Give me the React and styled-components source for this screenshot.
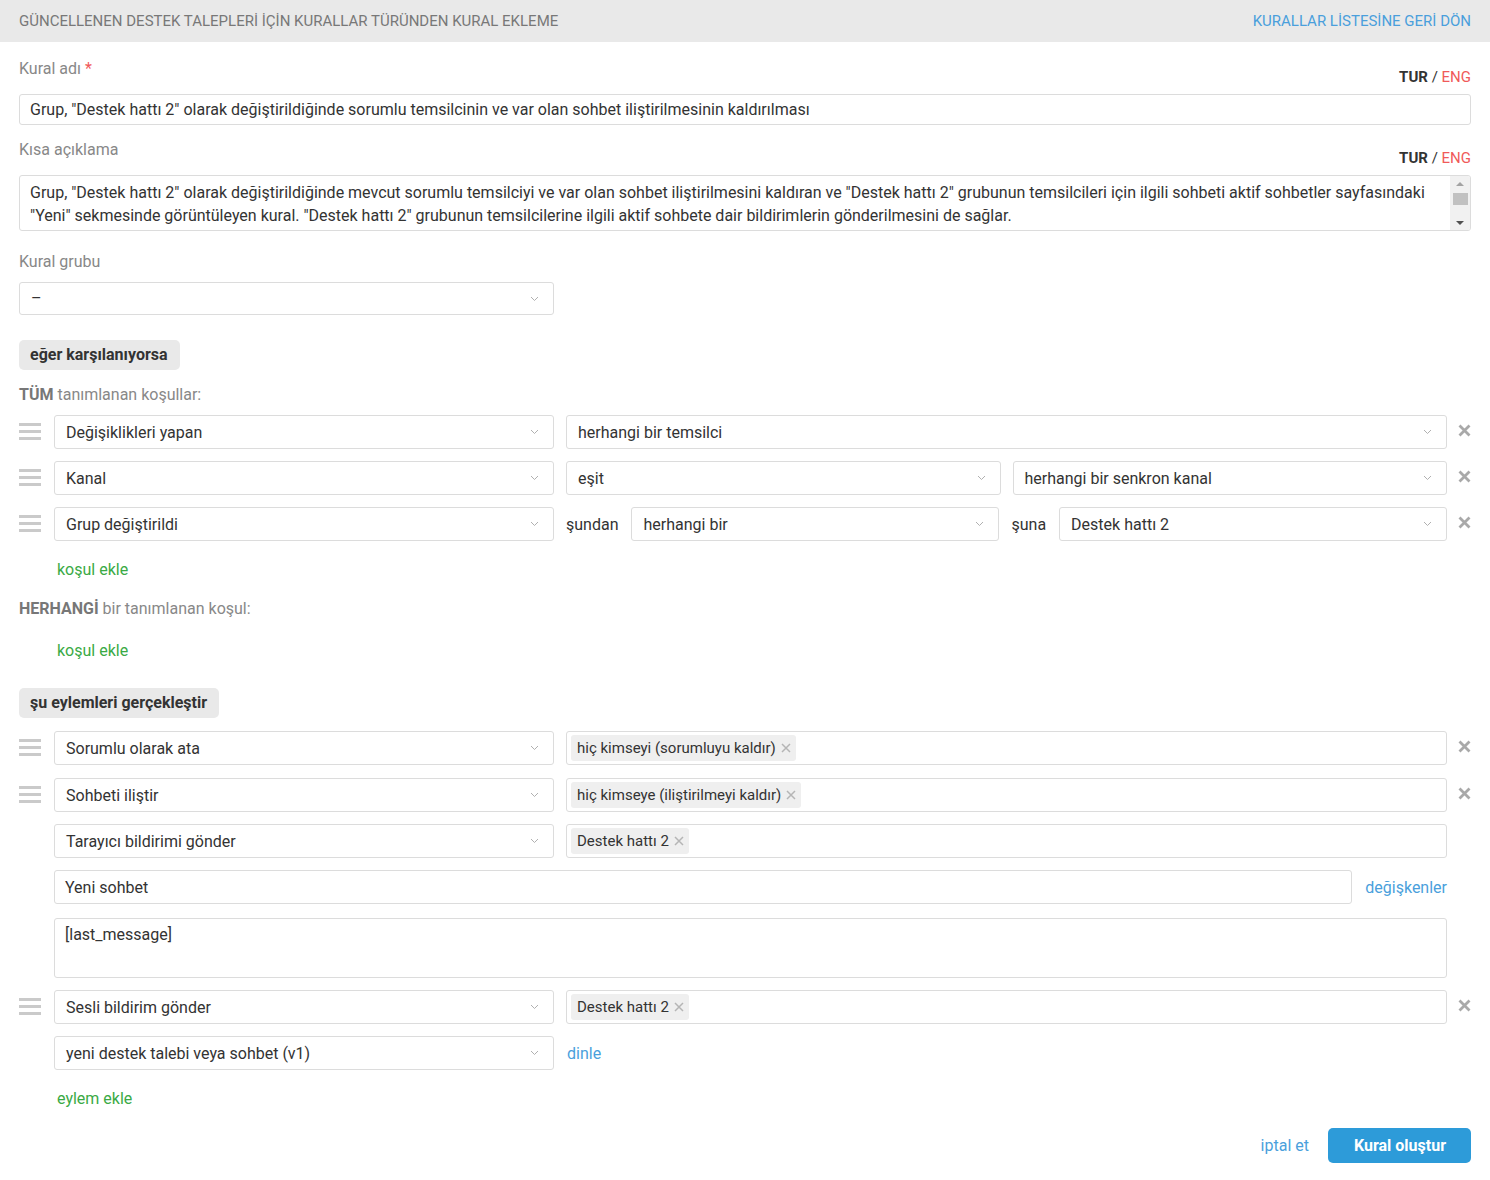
import React from 'react'
import styled, { createGlobalStyle } from 'styled-components'

const GlobalStyle = createGlobalStyle`
  body {
    margin: 0;
    background: #fff;
    font-family: Roboto, "Liberation Sans", sans-serif;
    color: #333;
  }
`

const colors = {
  text: '#333',
  muted: '#888',
  border: '#dcdcdc',
  blue: '#4a9fdc',
  green: '#3aaa45',
  red: '#f05a5a',
  grey: '#e9e9e9'
}

const Page = styled.div`
  width: 1490px;
`

const TopBar = styled.header`
  display: flex;
  justify-content: space-between;
  align-items: center;
  height: 42px;
  padding: 0 19px;
  background: ${colors.grey};
  font-size: 15px;
`

const Title = styled.span`
  color: #787878;
`

const BackLink = styled.a`
  color: ${colors.blue};
  text-decoration: none;
`

const Body = styled.main`
  padding: 16px 19px 17px;
`

const FieldHead = styled.div`
  display: flex;
  justify-content: space-between;
  align-items: flex-end;
  height: ${p => p.$h || 36}px;
  padding-bottom: 8px;
  box-sizing: border-box;
  margin-top: ${p => p.$top || 0}px;
`

const Label = styled.label`
  align-self: flex-start;
  color: ${colors.muted};
  font-size: 16px;
  line-height: 22px;

  span {
    color: ${colors.red};
  }
`

const Lang = styled.div`
  font-size: 15px;
  line-height: 18px;
  color: ${colors.text};

  b {
    font-weight: 700;
  }

  em {
    font-style: normal;
    color: ${colors.red};
  }
`

const TextInput = styled.div`
  display: flex;
  align-items: center;
  box-sizing: border-box;
  height: ${p => p.$h || 31}px;
  padding: 0 10px;
  border: 1px solid ${colors.border};
  border-radius: 3px;
  font-size: 16px;
  color: ${colors.text};
  flex: ${p => p.$flex || 'none'};
`

const TextArea = styled.div`
  position: relative;
  box-sizing: border-box;
  height: 56px;
  padding: 5px 24px 0 10px;
  border: 1px solid ${colors.border};
  border-radius: 3px;
  font-size: 16px;
  line-height: 23px;
  color: ${colors.text};
  overflow: hidden;
`

const ScrollTrack = styled.div`
  position: absolute;
  top: 0;
  right: 0;
  bottom: 0;
  width: 20px;
  background: #f1f1f1;
  display: flex;
  flex-direction: column;
  align-items: center;
  padding: 6px 0 5px;
  box-sizing: border-box;
`

const Arrow = styled.div`
  width: 0;
  height: 0;
  border-left: 4px solid transparent;
  border-right: 4px solid transparent;
  ${p => p.$up ? 'border-bottom: 4px solid #a3a3a3;' : 'border-top: 4px solid #505050; margin-top: auto;'}
`

const Thumb = styled.div`
  width: 15px;
  height: 12px;
  background: #c1c1c1;
  margin-top: 7px;
`

const SelectBox = styled.div`
  display: flex;
  align-items: center;
  justify-content: space-between;
  box-sizing: border-box;
  width: ${p => p.$w ? p.$w + 'px' : 'auto'};
  flex: ${p => p.$flex || 'none'};
  height: ${p => p.$h || 34}px;
  padding: 0 14px 0 11px;
  border: 1px solid ${colors.border};
  border-radius: 3px;
  background: #fff;
  font-size: 16px;
  color: ${colors.text};
`

const Chevron = () => (
  <svg width="9" height="6" viewBox="0 0 9 6" fill="none">
    <path d="M1 1l3.5 3.5L8 1" stroke="#b0b0b0" strokeWidth="1" />
  </svg>
)

const Select = ({ children, ...rest }) => (
  <SelectBox {...rest}>
    <span>{children}</span>
    <Chevron />
  </SelectBox>
)

const Section = styled.div`
  display: inline-block;
  margin-top: ${p => p.$top}px;
  padding: 0 12px 0 11px;
  height: 30px;
  line-height: 30px;
  border-radius: 5px;
  background: ${colors.grey};
  font-size: 16px;
  font-weight: 700;
  color: ${colors.text};
`

const SubHead = styled.div`
  margin-top: ${p => p.$top}px;
  font-size: 16px;
  color: ${colors.muted};
  line-height: 20px;

  b {
    color: #777;
  }
`

const Rows = styled.div`
  display: flex;
  flex-direction: column;
  gap: 12px;
  margin-top: ${p => p.$top || 0}px;
`

const Row = styled.div`
  display: flex;
  align-items: flex-start;
  margin-top: ${p => p.$top || 0}px;
`

const HandleCol = styled.div`
  width: 35px;
  height: 34px;
  display: flex;
  align-items: center;
  flex: none;
`

const Handle = styled.div`
  width: 22px;
  display: flex;
  flex-direction: column;
  gap: 4px;
  margin-top: -2px;

  i {
    display: block;
    height: 3px;
    background: #cacaca;
  }
`

const Drag = () => (
  <Handle>
    <i />
    <i />
    <i />
  </Handle>
)

const Main = styled.div`
  flex: 1;
  display: flex;
  align-items: center;
  gap: 12px;
  min-width: 0;
`

const Word = styled.span`
  font-size: 16px;
  color: ${colors.text};
  margin-right: 1px;
`

const RemoveCol = styled.div`
  width: 24px;
  height: 34px;
  flex: none;
  display: flex;
  align-items: center;
  justify-content: flex-end;
  padding-bottom: 4px;
  box-sizing: border-box;
`

const Remove = () => (
  <svg width="13" height="13" viewBox="0 0 13 13">
    <path d="M1.5 1.5l10 10M11.5 1.5l-10 10" stroke="#a9a9a9" strokeWidth="2.8" />
  </svg>
)

const TagField = styled.div`
  flex: 1;
  display: flex;
  align-items: center;
  box-sizing: border-box;
  height: 34px;
  padding: 0 4px;
  border: 1px solid ${colors.border};
  border-radius: 3px;
`

const Tag = styled.span`
  display: inline-flex;
  align-items: center;
  gap: 5px;
  height: 26px;
  padding: 0 5px 0 6px;
  border-radius: 3px;
  background: #efefef;
  font-size: 15px;
  color: ${colors.text};
`

const TagX = () => (
  <svg width="10" height="10" viewBox="0 0 10 10">
    <path d="M1 1l8 8M9 1l-8 8" stroke="#b5b5b5" strokeWidth="1.5" />
  </svg>
)

const AddLink = styled.a`
  display: block;
  margin: ${p => p.$top}px 0 0 38px;
  font-size: 16px;
  line-height: 20px;
  color: ${colors.green};
  text-decoration: none;
`

const BlueLink = styled.a`
  font-size: 16px;
  color: ${colors.blue};
  text-decoration: none;
`

const Indented = styled.div`
  display: flex;
  align-items: center;
  gap: 13px;
  margin-left: 35px;
  margin-right: 24px;
`

const BigArea = styled.div`
  box-sizing: border-box;
  height: 60px;
  margin: 2px 24px 0 35px;
  padding: 6px 10px;
  border: 1px solid ${colors.border};
  border-radius: 3px;
  font-size: 16px;
  line-height: 20px;
  color: ${colors.text};
`

const Footer = styled.div`
  display: flex;
  justify-content: flex-end;
  align-items: center;
  gap: 19px;
  margin-top: 19px;
`

const Primary = styled.button`
  height: 35px;
  padding: 0 25px 0 26px;
  border: none;
  border-radius: 5px;
  background: #2d9bd9;
  color: #fff;
  font-family: inherit;
  font-size: 16px;
  font-weight: 700;
`

const Langs = () => (
  <Lang>
    <b>TUR</b> / <em>ENG</em>
  </Lang>
)

const App = () => (
  <Page>
    <GlobalStyle />
    <TopBar>
      <Title>GÜNCELLENEN DESTEK TALEPLERİ İÇİN KURALLAR TÜRÜNDEN KURAL EKLEME</Title>
      <BackLink href="#">KURALLAR LİSTESİNE GERİ DÖN</BackLink>
    </TopBar>
    <Body>
      <FieldHead>
        <Label>Kural adı <span>*</span></Label>
        <Langs />
      </FieldHead>
      <TextInput>Grup, "Destek hattı 2" olarak değiştirildiğinde sorumlu temsilcinin ve var olan sohbet iliştirilmesinin kaldırılması</TextInput>
      <FieldHead $top={14}>
        <Label>Kısa açıklama</Label>
        <Langs />
      </FieldHead>
      <TextArea>
        Grup, "Destek hattı 2" olarak değiştirildiğinde mevcut sorumlu temsilciyi ve var olan sohbet iliştirilmesini kaldıran ve "Destek hattı 2" grubunun temsilcileri için ilgili sohbeti aktif sohbetler sayfasındaki "Yeni" sekmesinde görüntüleyen kural. "Destek hattı 2" grubunun temsilcilerine ilgili aktif sohbete dair bildirimlerin gönderilmesini de sağlar.
        <ScrollTrack>
          <Arrow $up />
          <Thumb />
          <Arrow />
        </ScrollTrack>
      </TextArea>
      <FieldHead $top={20} $h={31}>
        <Label>Kural grubu</Label>
      </FieldHead>
      <Select $w={535} $h={33}>–</Select>

      <Section $top={25}>eğer karşılanıyorsa</Section>
      <SubHead $top={15}><b>TÜM</b> tanımlanan koşullar:</SubHead>
      <Rows $top={10}>
        <Row>
          <HandleCol><Drag /></HandleCol>
          <Main>
            <Select $w={500}>Değişiklikleri yapan</Select>
            <Select $flex="1">herhangi bir temsilci</Select>
          </Main>
          <RemoveCol><Remove /></RemoveCol>
        </Row>
        <Row>
          <HandleCol><Drag /></HandleCol>
          <Main>
            <Select $w={500}>Kanal</Select>
            <Select $flex="1">eşit</Select>
            <Select $flex="1">herhangi bir senkron kanal</Select>
          </Main>
          <RemoveCol><Remove /></RemoveCol>
        </Row>
        <Row>
          <HandleCol><Drag /></HandleCol>
          <Main>
            <Select $w={500}>Grup değiştirildi</Select>
            <Word>şundan</Word>
            <Select $w={368}>herhangi bir</Select>
            <Word>şuna</Word>
            <Select $flex="1">Destek hattı 2</Select>
          </Main>
          <RemoveCol><Remove /></RemoveCol>
        </Row>
      </Rows>
      <AddLink href="#" $top={19}>koşul ekle</AddLink>
      <SubHead $top={19}><b>HERHANGİ</b> bir tanımlanan koşul:</SubHead>
      <AddLink href="#" $top={22}>koşul ekle</AddLink>

      <Section $top={27}>şu eylemleri gerçekleştir</Section>
      <Rows $top={13}>
        <Row>
          <HandleCol><Drag /></HandleCol>
          <Main>
            <Select $w={500}>Sorumlu olarak ata</Select>
            <TagField><Tag>hiç kimseyi (sorumluyu kaldır)<TagX /></Tag></TagField>
          </Main>
          <RemoveCol><Remove /></RemoveCol>
        </Row>
        <Row $top={1}>
          <HandleCol><Drag /></HandleCol>
          <Main>
            <Select $w={500}>Sohbeti iliştir</Select>
            <TagField><Tag>hiç kimseye (iliştirilmeyi kaldır)<TagX /></Tag></TagField>
          </Main>
          <RemoveCol><Remove /></RemoveCol>
        </Row>
        <Row>
          <HandleCol />
          <Main>
            <Select $w={500}>Tarayıcı bildirimi gönder</Select>
            <TagField><Tag>Destek hattı 2<TagX /></Tag></TagField>
          </Main>
          <RemoveCol />
        </Row>
        <Indented>
          <TextInput $h={34} $flex="1">Yeni sohbet</TextInput>
          <BlueLink href="#">değişkenler</BlueLink>
        </Indented>
        <BigArea>[last_message]</BigArea>
        <Row>
          <HandleCol><Drag /></HandleCol>
          <Main>
            <Select $w={500}>Sesli bildirim gönder</Select>
            <TagField><Tag>Destek hattı 2<TagX /></Tag></TagField>
          </Main>
          <RemoveCol><Remove /></RemoveCol>
        </Row>
        <Indented>
          <Select $w={500}>yeni destek talebi veya sohbet (v1)</Select>
          <BlueLink href="#">dinle</BlueLink>
        </Indented>
      </Rows>
      <AddLink href="#" $top={19}>eylem ekle</AddLink>
      <Footer>
        <BlueLink href="#">iptal et</BlueLink>
        <Primary>Kural oluştur</Primary>
      </Footer>
    </Body>
  </Page>
)

export default App
